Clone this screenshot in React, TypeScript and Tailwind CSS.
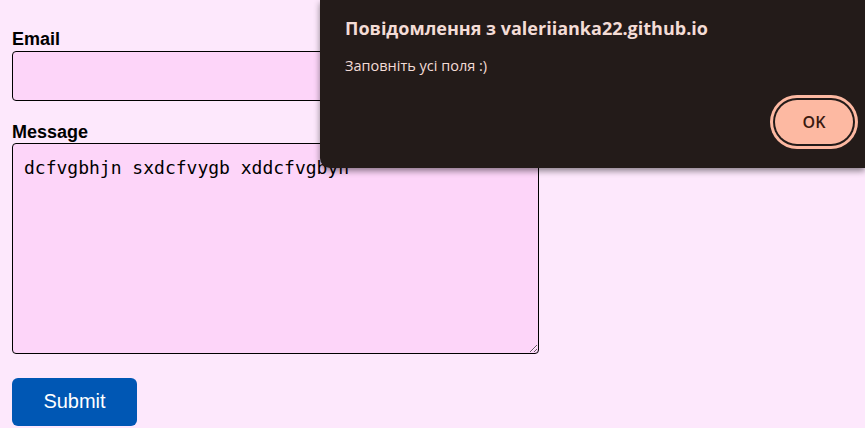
import React from "react";

export default function App() {
  return (
    <div className="relative w-[865px] h-[428px] overflow-hidden bg-[#fde8fc]" style={{ fontFamily: "'Liberation Sans', Arial, sans-serif" }}>
      <form className="flex flex-col pl-[12px] pt-[28px] w-[539px]" onSubmit={(e) => e.preventDefault()}>
        <label className="block text-[18px] leading-[22px] font-bold text-black">Email</label>
        <input className="mt-[1px] h-[50px] w-[527px] rounded-[4px] border border-black bg-[#fdd5f9] outline-none" />
        <label className="block mt-[20px] text-[18px] leading-[22px] font-bold text-black">Message</label>
        <textarea
          className="h-[211px] w-[527px] rounded-[4px] border border-black bg-[#fdd5f9] px-[11px] pt-[13px] text-[18px] leading-[22px] text-black outline-none"
          style={{ fontFamily: "'DejaVu Sans Mono', 'Liberation Mono', monospace" }}
          defaultValue="dcfvgbhjn sxdcfvygb xddcfvgbyh"
        />
        <button className="mt-[24px] h-[48px] w-[125px] rounded-[6px] bg-[#0057b4] pb-[3px] text-[20px] text-white">Submit</button>
      </form>

      <div
        className="absolute top-0 left-[320px] right-0 h-[168px] rounded-bl-[10px] bg-[#231b19] shadow-[0_3px_6px_rgba(0,0,0,0.45)] pl-[25px] pt-[15px]"
        style={{ fontFamily: "'Open Sans', 'Noto Sans', sans-serif" }}
      >
        <div className="text-[18px] leading-[26px] font-bold text-[#f3dcd6]">Повідомлення з valeriianka22.github.io</div>
        <div className="mt-[15px] text-[14.5px] leading-[20px] text-[#f3dcd6]">Заповніть усі поля :)</div>
        <div className="absolute right-[7px] top-[95px] rounded-full bg-[#fdb9a2] p-[3px]">
          <div className="rounded-full bg-[#231b19] p-[2px]">
            <button className="flex h-[44px] w-[78px] items-center justify-center rounded-full bg-[#fdb9a2] text-[16px] font-semibold text-[#3a1a10]">OK</button>
          </div>
        </div>
      </div>
    </div>
  );
}
